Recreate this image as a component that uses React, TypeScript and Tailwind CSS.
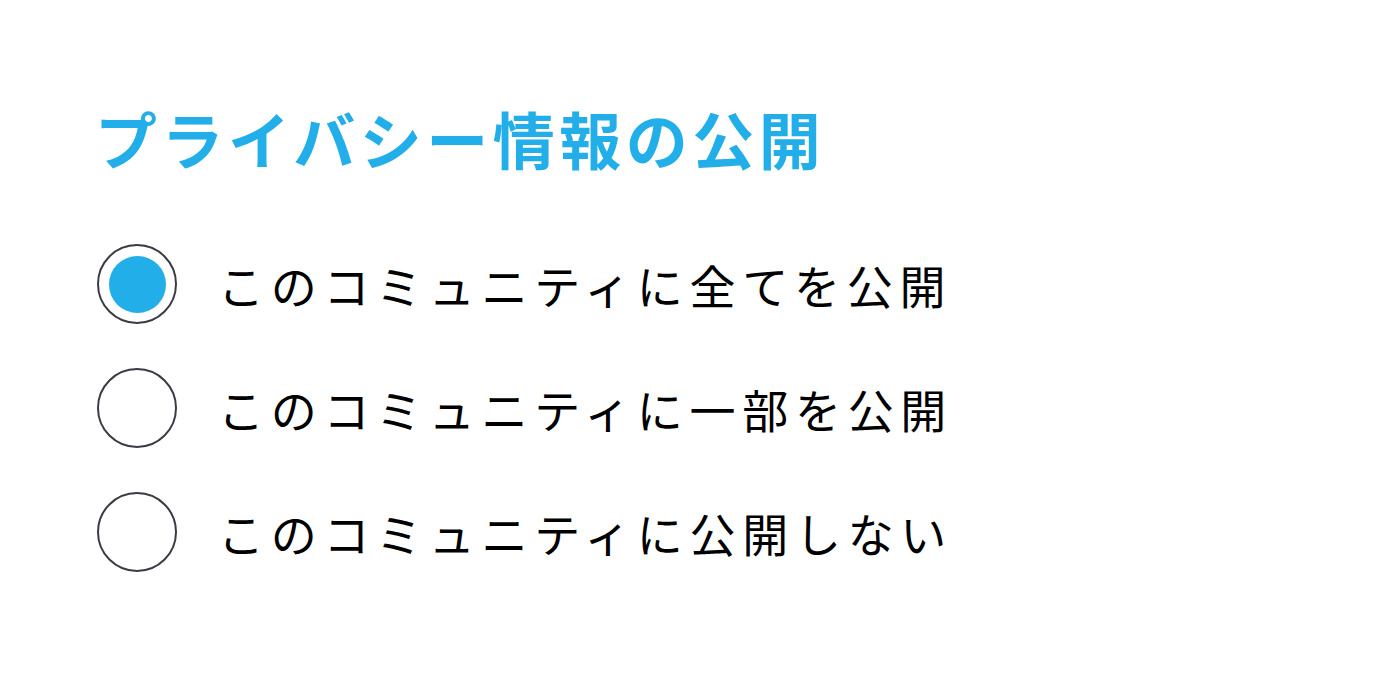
import React, { useState } from "react";

const options = [
  "このコミュニティに全てを公開",
  "このコミュニティに一部を公開",
  "このコミュニティに公開しない",
];

function Radio({ checked }: { checked: boolean }) {
  return (
    <span className="flex h-[80px] w-[80px] shrink-0 items-center justify-center rounded-full border-2 border-[#3b3b46] bg-white">
      {checked && <span className="h-[57px] w-[57px] rounded-full bg-[#22aee8]" />}
    </span>
  );
}

export default function App() {
  const [selected, setSelected] = useState(0);
  return (
    <div
      className="min-h-[684px] w-[1380px] bg-white pl-[97px] pt-[96px]"
      style={{ fontFamily: '"Noto Sans CJK JP", "Noto Sans", sans-serif' }}
    >
      <h1 className="-ml-[2px] text-[62px] font-bold leading-[84px] tracking-[4.5px] text-[#22aee8]">
        プライバシー情報の公開
      </h1>
      <div className="mt-[64px] flex flex-col gap-[44px]">
        {options.map((label, i) => (
          <button
            key={label}
            type="button"
            onClick={() => setSelected(i)}
            className="flex items-center gap-[41px] text-left"
          >
            <Radio checked={selected === i} />
            <span className="text-[46px] font-normal leading-[80px] tracking-[6.7px] text-black">
              {label}
            </span>
          </button>
        ))}
      </div>
    </div>
  );
}
